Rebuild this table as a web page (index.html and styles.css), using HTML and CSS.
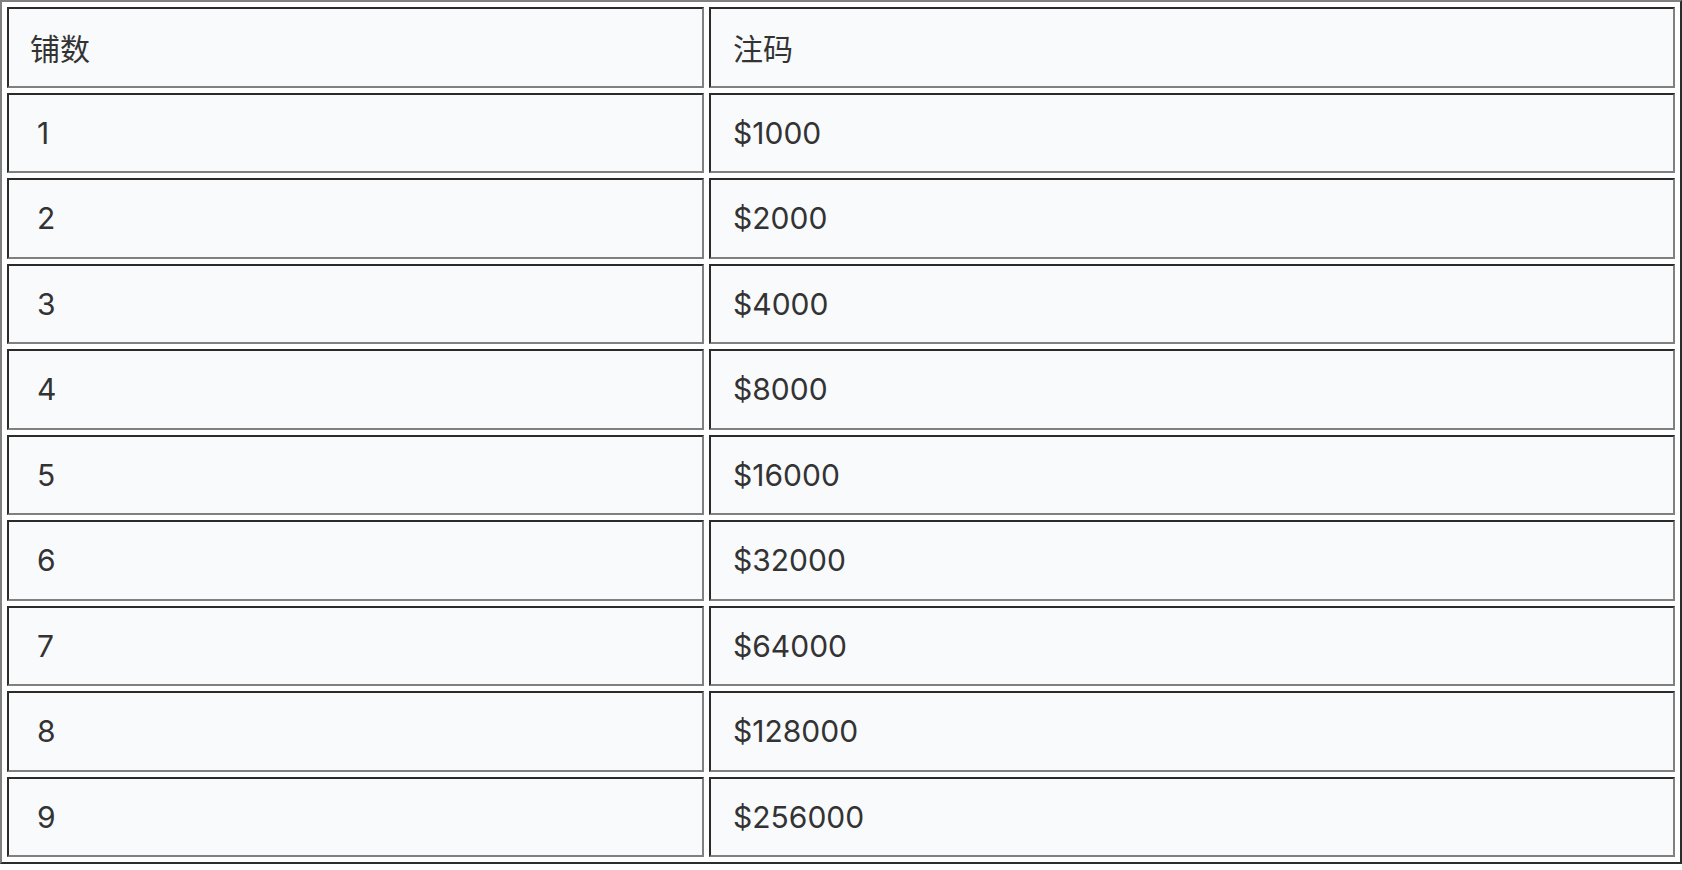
FILE: index.html
```html
<!DOCTYPE html>
<html lang="zh">
<head>
<meta charset="utf-8">
<title>注码表</title>
<link rel="stylesheet" href="styles.css">
</head>
<body>
<table class="bet-table">
  <tr><td class="c1">铺数</td><td class="c2">注码</td></tr>
  <tr><td class="c1 num">1</td><td class="c2">$1000</td></tr>
  <tr><td class="c1 num">2</td><td class="c2">$2000</td></tr>
  <tr><td class="c1 num">3</td><td class="c2">$4000</td></tr>
  <tr><td class="c1 num">4</td><td class="c2">$8000</td></tr>
  <tr><td class="c1 num">5</td><td class="c2">$16000</td></tr>
  <tr><td class="c1 num">6</td><td class="c2">$32000</td></tr>
  <tr><td class="c1 num">7</td><td class="c2">$64000</td></tr>
  <tr><td class="c1 num">8</td><td class="c2">$128000</td></tr>
  <tr><td class="c1 num">9</td><td class="c2">$256000</td></tr>
</table>
</body>
</html>
```
FILE: styles.css
```css
html, body {
  margin: 0;
  padding: 0;
  background: #ffffff;
}
.bet-table {
  width: 1682px;
  height: 864px;
  border-collapse: separate;
  border-spacing: 5px;
  border-style: solid;
  border-width: 2px;
  border-color: #808080 #2b2b2b #2b2b2b #808080;
  background: #ffffff;
  font-family: Inter, "Noto Sans CJK SC", sans-serif;
  font-size: 30px;
  color: #333333;
  table-layout: fixed;
}
.bet-table td {
  border-style: solid;
  border-width: 2px;
  border-color: #2b2b2b #808080 #808080 #2b2b2b;
  background: #f9fafc;
  padding: 0 0 0 22px;
  vertical-align: middle;
  height: 76px;
  box-sizing: border-box;
}
.bet-table .c1 {
  width: 697px;
  padding-left: 21px;
}
.bet-table .num {
  padding-left: 28px;
}
```
